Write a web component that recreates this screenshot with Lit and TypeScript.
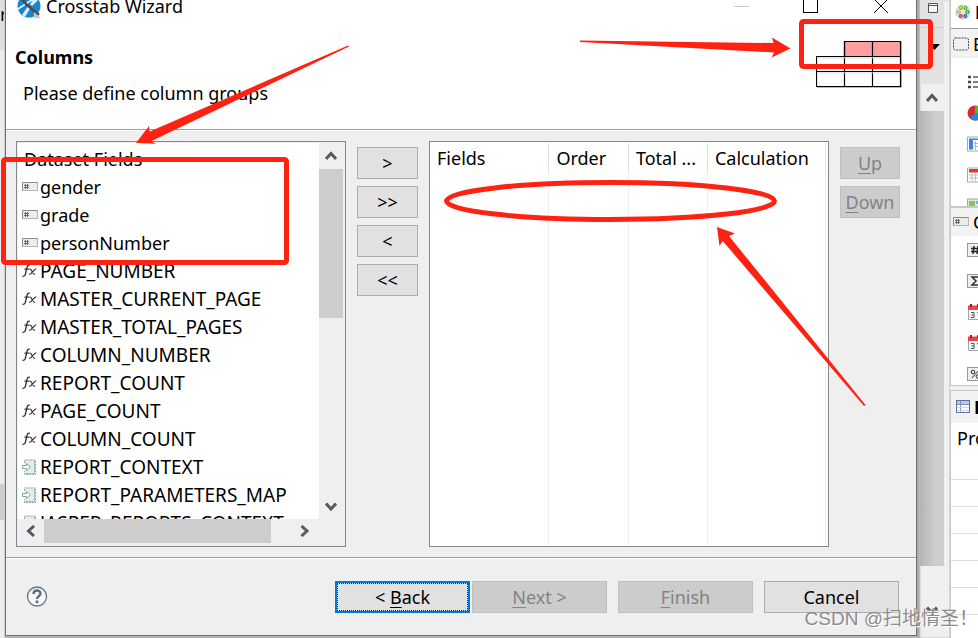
import { LitElement, html, svg, css } from "lit";
import { customElement } from "lit/decorators.js";
import { classMap } from "lit/directives/class-map.js";

type Kind = "field" | "fx" | "param";

const FIELDS: { kind: Kind; name: string }[] = [
  { kind: "field", name: "gender" },
  { kind: "field", name: "grade" },
  { kind: "field", name: "personNumber" },
  { kind: "fx", name: "PAGE_NUMBER" },
  { kind: "fx", name: "MASTER_CURRENT_PAGE" },
  { kind: "fx", name: "MASTER_TOTAL_PAGES" },
  { kind: "fx", name: "COLUMN_NUMBER" },
  { kind: "fx", name: "REPORT_COUNT" },
  { kind: "fx", name: "PAGE_COUNT" },
  { kind: "fx", name: "COLUMN_COUNT" },
  { kind: "param", name: "REPORT_CONTEXT" },
  { kind: "param", name: "REPORT_PARAMETERS_MAP" },
  { kind: "param", name: "JASPER_REPORTS_CONTEXT" },
];

const fieldIcon = () => html`<svg width="16" height="16" viewBox="0 0 16 16" aria-hidden="true">
  <rect x="0.5" y="3.5" width="15" height="8" fill="#ececec" stroke="#b4b4b4"/>
  <path d="M0.5 11.5V3.5H15.5" fill="none" stroke="#8c8c8c"/>
  <path d="M3.5 5v5M5.5 5v5M2 6.5h5M2 8.5h5" stroke="#555" stroke-width="0.8"/></svg>`;

const fxIcon = () => html`<svg width="16" height="16" viewBox="0 0 16 16" aria-hidden="true">
  <path d="M0.5 13.2C3 14 3.6 11 4.3 7.5C5 3.5 5.6 1.6 7.8 2.3M2.4 6.2H7" fill="none" stroke="#333" stroke-width="1.3"/>
  <path d="M7.5 6.3C10 5 10 11.5 13 11.3M14.3 5.8C12 5.4 10 11.6 7.2 11.3" fill="none" stroke="#333" stroke-width="1.2"/></svg>`;

const paramIcon = () => html`<svg width="16" height="16" viewBox="0 0 16 16" aria-hidden="true">
  <path d="M2.5 0.5H13.5V15.5H2.5Z" fill="#e3eeeb"/>
  <path d="M2.5 4V1H13.5V15.5H2.5V12" fill="none" stroke="#8fa9a3" stroke-dasharray="2 1"/>
  <path d="M12.5 2v13M3 14.5h10" stroke="#a9c0bb"/>
  <path d="M0.5 6.5H4.5V4.5L8.500 8L4.5 11.500V9.5H0.5Z" fill="#fff" stroke="#8aa5a0"/></svg>`;

const ICONS = { field: fieldIcon, fx: fxIcon, param: paramIcon };

const chevron = (d: string) => html`<svg width="12" height="12" viewBox="0 0 12 12" aria-hidden="true">
  <path d=${d} fill="none" stroke="#5a5a5a" stroke-width="3"/></svg>`;
const UP = "M1 9L6 3.5L11 9";
const DOWN = "M1 3.5L6 9L11 3.5";
const LEFT = "M9 1L3.5 6L9 11";
const RIGHT = "M3.5 1L9 6L3.5 11";

const calendar = svg`<path d="M1.5 3.5H15V15.5H1.5Z" fill="#f3f6f6" stroke="#9aa8a8"/>
  <path d="M1 1.5H15.5V6H1Z" fill="#e2474b"/><path d="M4 0v3M11 0v3" stroke="#9c1c20" stroke-width="2"/>
  <path d="M4 8.5h3v5h-3M4.5 11H7M10 9l1.5-1v6" fill="none" stroke="#4a5a5a"/>`;

@customElement("side-palette")
class SidePalette extends LitElement {
  static styles = css`
    :host { display: flex; flex-direction: column; height: 100%; background: #f0f0f0; overflow: hidden; }
    .pane { background: #fff; border: 1px solid #c8c8c8; border-right: 0; box-sizing: border-box; overflow: hidden; flex: none; }
    .top { height: 207px; border-top: 0; }
    .mid { height: 179px; }
    .low { flex: 1; margin-top: 4px; border-bottom: 0; }
    .head { display: flex; align-items: center; background: #f2f2f2; gap: 4px; padding-left: 2px; box-sizing: border-box; white-space: nowrap; overflow: hidden; }
    .tab { height: 29px; background: #fff; border-bottom: 1px solid #a0a0a0; padding: 0 0 5px 4px; }
    .tools { height: 29px; }
    .cat { height: 28px; }
    .props { height: 32px; padding-left: 5px; }
    .items { display: flex; flex-direction: column; padding: 16px 0 0 16px; gap: 15px; }
    .mid .items { padding-top: 6px; }
    svg { display: block; flex: none; }
    .label { line-height: 30px; padding-left: 6px; white-space: nowrap; }
    .spacer { height: 26px; }
    .line { height: 26px; border-top: 1px solid #dcdcdc; }
    b { font-weight: 700; }
  `;
  render() {
    const ic = (body: unknown) => html`<svg width="16" height="16" viewBox="0 0 16 16" aria-hidden="true">${body}</svg>`;
    const tag = svg`<rect x="0.5" y="1.5" width="18" height="13" fill="#eee" stroke="#999"/>`;
    return html`
      <section class="pane top">
        <div class="head tab">
          ${ic(svg`<circle cx="8" cy="8" r="7" fill="#dbe9f5" stroke="#b4cbe0"/>
            <g fill="#fff" stroke-width="1.4"><circle cx="6" cy="3.8" r="1.4" stroke="#8ab81c"/><circle cx="10.5" cy="4" r="1.4" stroke="#6aa81c"/>
            <circle cx="12.3" cy="8" r="1.4" stroke="#2aa835"/><circle cx="10.3" cy="12" r="1.3" stroke="#2565c0"/>
            <circle cx="5.8" cy="12" r="1.3" stroke="#d8342a"/><circle cx="3.8" cy="8" r="1.4" stroke="#eba21a"/></g>`)}
          <b>Palette</b>
        </div>
        <div class="head tools">
          ${ic(svg`<rect x="0.5" y="2" width="15" height="12" rx="2" fill="none" stroke="#444" stroke-dasharray="2 1"/>`)}
          <span>Basic</span>
        </div>
        <div class="items">
          ${ic(svg`<path d="M1 3h3M1 8h3M1 13h3" stroke="#444" stroke-width="2.4"/><path d="M6 3h10M6 8h10M6 13h10" stroke="#555" stroke-width="1.4"/>`)}
          ${ic(svg`<circle cx="8" cy="8" r="7.5" fill="#d42b35"/><path d="M8 8V0.5A7.5 7.5 0 0 1 15.5 8Z" fill="#5cb531"/><path d="M8 8H15.5A7.5 7.5 0 0 1 3 13.6Z" fill="#2389d0"/>`)}
          ${ic(svg`<path d="M0.5 1H18V15H0.5Z" fill="#fff" stroke="#98adad"/><path d="M2 2.5H6V13.5H2ZM6 2.5H16V4H6Z" fill="#3f83df"/><path d="M7 7.5h9M7 10.5h9M8.5 5v9M11.5 5v9M14.5 5v9" stroke="#a5bfd0"/>`)}
          ${ic(svg`<path d="M0.5 1H18V15H0.5Z" fill="#fff" stroke="#98adad"/><path d="M2 2H16V5.5H2Z" fill="#ee3034"/><path d="M2 8h14M2 11h14M5 6v8M8.5 6v8M12 6v8" stroke="#b3c6c6"/>`)}
          ${ic(svg`<path d="M0.5 1H18V15H0.5Z" fill="#d9ecd4" stroke="#98adad"/><path d="M2 3H8V9H2Z" fill="#8fbd62"/><path d="M9 3H16V6H9Z" fill="#71b5dd"/>`)}
        </div>
      </section>
      <section class="pane mid">
        <div class="head cat">${fieldIcon()}<span>Composite</span></div>
        <div class="items">
          ${ic(svg`${tag}<path d="M7 4L6 12M11 4L10 12M4 6.5H13M4 9.5H13" stroke="#222" stroke-width="1.5"/>`)}
          ${ic(svg`${tag}<path d="M12 5V4H5L9 8L5 12H12V11" fill="none" stroke="#333" stroke-width="1.5"/>`)}
          ${ic(calendar)} ${ic(calendar)}
          ${ic(svg`${tag}<circle cx="6" cy="6" r="1.8" fill="none" stroke="#333"/><circle cx="11" cy="10.5" r="1.8" fill="none" stroke="#333"/><path d="M12 4L5 12" stroke="#333"/>`)}
        </div>
      </section>
      <section class="pane low">
        <div class="head props">
          <svg width="14" height="14" viewBox="0 0 14 14" aria-hidden="true"><rect x="0.5" y="0.5" width="13" height="12" fill="#fff" stroke="#5c74a0"/><path d="M1 1H13V4H1Z" fill="#b9c9e2"/><path d="M1 4.5h12M4.5 1v12" stroke="#7e92b5"/><path d="M1 7.5h12M1 10.5h12" stroke="#ccd6e6"/></svg>
          <b>Properties</b>
        </div>
        <div class="label">Property</div>
        <div class="spacer"></div>
        ${[1, 2, 3, 4, 5, 6].map(() => html`<div class="line"></div>`)}
      </section>`;
  }
}

@customElement("app-root")
class AppRoot extends LitElement {
  static styles = css`
    :host {
      display: flex; position: relative; height: 100vh; min-height: 560px; overflow: hidden;
      font: 18px/28px "Noto Sans", "Noto Sans CJK SC", sans-serif; color: #000; background: #b4b4b4;
    }
    * { box-sizing: border-box; }
    svg { display: block; flex: none; }
    .behind { width: 5px; flex: none; display: flex; flex-direction: column; background: #ededed; overflow: hidden; border-right: 1px solid #d0d0d0; }
    .behind span { flex: none; height: 50px; background: #dfdfdf; }
    .behind i { flex: none; height: 36px; margin-top: 434px; background: #cfcfcf; }
    .dialog { flex: 1; min-width: 0; display: flex; flex-direction: column; margin-bottom: 2px; background: #efefef; border: 1px solid #6e6e6e; border-top: 0; }
    .titlebar { display: flex; align-items: center; flex: none; height: 30px; margin-top: -9px; padding: 0 27px 0 11px; background: #fff; gap: 5px; }
    .titlebar h1 { flex: 1; font: inherit; margin: 0; }
    .controls { display: flex; align-items: center; gap: 54px; }
    .controls button { padding: 0; border: 0; background: none; }
    .header { display: flex; justify-content: space-between; flex: none; height: 109px; padding: 20px 14px 0 9px; background: #fff; border-bottom: 1px solid #a0a0a0; }
    .header h2 { font-size: 18px; line-height: 32px; margin: 0; }
    .header p { margin: 6px 0 0 8px; }
    .body { display: grid; grid-template: minmax(0, 1fr) / minmax(0, 330fr) 61px minmax(0, 400fr) 60px; flex: 1; min-height: 0; column-gap: 11px; padding: 10px 16px 10px 10px; border-top: 1px solid #fff; }
    .tree { display: grid; grid-template: minmax(0, 1fr) 25px / minmax(0, 1fr) 24px; background: #efefef; border: 1px solid #828790; padding: 1px 2px 2px 1px; }
    .list { margin: 0; padding: 2px 0 0 4px; list-style: none; overflow: hidden; background: #fff; white-space: nowrap; }
    .list li { display: flex; align-items: center; height: 28px; gap: 2px; }
    .list .root { padding-left: 2px; }
    .list .builtin { font-size: 19px; }
    .bar { display: flex; align-items: center; background: #efefef; }
    .bar button, .strip button { display: flex; align-items: center; justify-content: center; border: 0; padding: 0; background: none; flex: none; }
    .vbar { flex-direction: column; }
    .vbar button { height: 26px; width: 24px; }
    .track { flex: 1; align-self: stretch; display: flex; }
    .vbar .track { flex-direction: column; }
    .vbar .thumb { height: 46%; }
    .thumb { background: #cdcdcd; }
    .hbar { padding: 0 2px 1px 0; }
    .hbar button { width: 26px; height: 24px; }
    .hbar .thumb { width: 92%; }
    .col { display: flex; flex-direction: column; gap: 7px; padding-top: 6px; }
    .btn { height: 32px; padding: 0; font: inherit; line-height: 28px; color: #000; background: #e1e1e1; border: 1px solid #adadad; }
    .btn:disabled { color: #838383; background: #ccc; border-color: #bfbfbf; }
    .btn u { text-underline-offset: 3px; text-decoration-thickness: 1px; }
    .grid { background: #fff; border: 1px solid #828790; padding: 1px 0; }
    table { width: 100%; height: 100%; border-collapse: separate; border-spacing: 0; table-layout: fixed; }
    th { height: 30px; padding: 0 0 0 7px; text-align: left; font-weight: 400; border-right: 1px solid #e2e2e2; white-space: nowrap; overflow: hidden; }
    td { padding: 0; border-right: 1px solid #e8f0f8; }
    .c1 { width: 30%; } .c2 { width: 20%; } .c3 { width: 79px; } .c5 { width: 2px; }
    .end { border: 0; padding: 0; }
    .footer { display: flex; align-items: center; flex: none; height: 78px; padding: 0 17px 0 20px; border-top: 1px solid #a0a0a0; box-shadow: inset 0 1px #fff; }
    .help { border: 0; padding: 0; background: none; margin-right: auto; }
    .nav { display: flex; gap: 11px; }
    .pair { display: flex; gap: 2px; }
    .nav .btn { width: 135px; }
    .back { border: 2px solid #0078d7; outline: 1px dotted #222; outline-offset: -3px; }
    .strip { width: 33px; flex: none; display: flex; flex-direction: column; padding: 0 5px 0 3px; background: #f0f0f0; border-right: 1px solid #d4d4d4; box-shadow: inset 3px 0 2px #a8a8a8; }
    .strip .cap { flex: none; height: 28px; display: flex; padding-left: 8px; background: #e2e2e2; border-bottom: 1px solid #d0d0d0; }
    .strip .menu { flex: none; height: 56px; padding: 15px 0 0 9px; background: #e2e2e2; }
    .strip button { height: 27px; }
    .strip .thumb { height: 455px; flex: none; background: linear-gradient(90deg, #b4b4b4, #cdcdcd 60%); }
    .strip .gap { height: 30px; flex: none; }
    side-palette { width: 28px; flex: none; }
    .marks { position: absolute; left: 0; top: 0; pointer-events: none; }
    .watermark { position: absolute; right: 0; bottom: 5px; color: #8c8c8c; text-shadow: 1px 1px #fff; font-size: 19px; font-family: "Liberation Sans", "Noto Sans CJK SC", sans-serif; white-space: nowrap; }
  `;

  render() {
    return html`
      <div class="behind"><span>r</span><i></i></div>
      <main class="dialog">
        <div class="titlebar">
          <svg width="24" height="24" viewBox="0 0 24 24" aria-hidden="true">
            <circle cx="12" cy="12" r="11.5" fill="#1686d0"/>
            <path d="M1 15L13 7L23 3" stroke="#e9f4fb" stroke-width="1.6" fill="none"/>
            <path d="M5 21L11 12L14 13L8 23ZM13 10L20 2L22 5L15 12Z" fill="#dceefa"/>
            <path d="M3 3L10 11L22 21" stroke="#4b4b4b" stroke-width="2.6" fill="none"/>
            <path d="M17 18L24 24H17Z" fill="#c4c4c4"/>
          </svg>
          <h1>Crosstab Wizard</h1>
          <div class="controls">
            <button aria-label="Minimize"><svg width="15" height="16"><path d="M0 8.5H15" stroke="#c8c8c8"/></svg></button>
            <button aria-label="Maximize"><svg width="16" height="16"><rect x="0.5" y="0.5" width="14" height="14" fill="none" stroke="#000"/></svg></button>
            <button aria-label="Close"><svg width="16" height="16"><path d="M1 1L15 15M15 1L1 15" stroke="#000"/></svg></button>
          </div>
        </div>
        <header class="header">
          <div>
            <h2>Columns</h2>
            <p>Please define column groups</p>
          </div>
          <svg width="86" height="48" viewBox="0 0 86 48" aria-hidden="true">
            <path d="M1 46.5H85.5V1" fill="none" stroke="#bbb"/>
            <g fill="#fff" stroke="#000" stroke-width="1.2">
              <path d="M28.5 0.5H84.5V15.5H28.5Z" fill="#ff9f9f"/>
              <path d="M0.5 15.5H84.5V45.5H0.5Z"/>
              <path d="M0.5 30.5H84.5M28.5 0.5V45.5M56.5 0.5V45.5" fill="none"/>
            </g>
            <path d="M1 17H84M1 32H84" fill="none" stroke="#d8d8d8"/>
          </svg>
        </header>
        <div class="body">
          <div class="tree">
            <ul class="list">
              <li class="root">Dataset Fields</li>
              ${FIELDS.map((f) => html`<li class=${classMap({ builtin: f.kind !== "field" })}>${ICONS[f.kind]()}<span>${f.name}</span></li>`)}
            </ul>
            <div class="bar vbar">
              <button aria-label="Scroll up">${chevron(UP)}</button>
              <div class="track"><div class="thumb"></div></div>
              <button aria-label="Scroll down">${chevron(DOWN)}</button>
            </div>
            <div class="bar hbar">
              <button aria-label="Scroll left">${chevron(LEFT)}</button>
              <div class="track"><div class="thumb"></div></div>
              <button aria-label="Scroll right">${chevron(RIGHT)}</button>
            </div>
          </div>
          <div class="col">
            ${[">", ">>", "<", "<<"].map((t) => html`<button class="btn">${t}</button>`)}
          </div>
          <div class="grid">
            <table>
              <colgroup><col class="c1"><col class="c2"><col class="c3"><col><col class="c5"></colgroup>
              <thead><tr><th>Fields</th><th>Order</th><th>Total ...</th><th>Calculation</th><td class="end"></td></tr></thead>
              <tbody><tr><td></td><td></td><td></td><td></td><td class="end"></td></tr></tbody>
            </table>
          </div>
          <div class="col">
            <button class="btn" disabled><u>U</u>p</button>
            <button class="btn" disabled><u>D</u>own</button>
          </div>
        </div>
        <footer class="footer">
          <button class="help" aria-label="Help"><svg width="22" height="22" viewBox="0 0 22 22">
            <circle cx="11" cy="10.5" r="9.5" fill="#f6f6f6" stroke="#65758c" stroke-width="1.3"/>
            <path d="M7.5 8C7.5 3.500 14.500 3.500 14.500 7.500C14.500 10 11 10 11 13" fill="none" stroke="#5a6c8c" stroke-width="2.4"/>
            <circle cx="11" cy="15.800" r="1.500" fill="#5a6c8c"/></svg></button>
          <div class="nav">
            <div class="pair">
              <button class="btn back">&lt; <u>B</u>ack</button>
              <button class="btn" disabled><u>N</u>ext &gt;</button>
            </div>
            <button class="btn" disabled><u>F</u>inish</button>
            <button class="btn">Cancel</button>
          </div>
        </footer>
      </main>
      <div class="strip">
        <div class="cap"><svg width="11" height="16"><path d="M0.5 3.5H9.5V12.5H0.5ZM0.5 5.5H9.5" fill="#f5f5f5" stroke="#555"/></svg></div>
        <div class="menu"><svg width="12" height="8"><path d="M0 1H11L5.5 7Z" fill="#000"/></svg></div>
        <button aria-label="Scroll up">${chevron(UP)}</button>
        <div class="thumb"></div>
        <div class="gap"></div>
        <button aria-label="Scroll down">${chevron(DOWN)}</button>
      </div>
      <side-palette></side-palette>
      <svg class="marks" width="978" height="638" viewBox="0 0 978 638" aria-hidden="true">
        <g fill="none" stroke="#ff2112" stroke-width="5">
          <rect x="3.5" y="159.5" width="283" height="103" rx="2"/>
          <rect x="801.5" y="21.5" width="129" height="45" rx="2"/>
          <ellipse cx="610.5" cy="201" rx="164" ry="18.5"/>
        </g>
        <g fill="#ff2112">
          <path d="M136 143L149 126L149.7 131.5L348 45.5L349 46.5L151.5 141L156 143.7Z"/>
          <path d="M580 40.5L773.5 43L772 37.5L790.5 48.5L771.7 57.5L774 52.5L580 42Z"/>
          <path d="M717 227L735 233.5L729 236L865.5 405L864 406L722.7 241L719.5 246Z"/>
        </g>
      </svg>
      <div class="watermark">CSDN @扫地情圣！</div>
    `;
  }
}
